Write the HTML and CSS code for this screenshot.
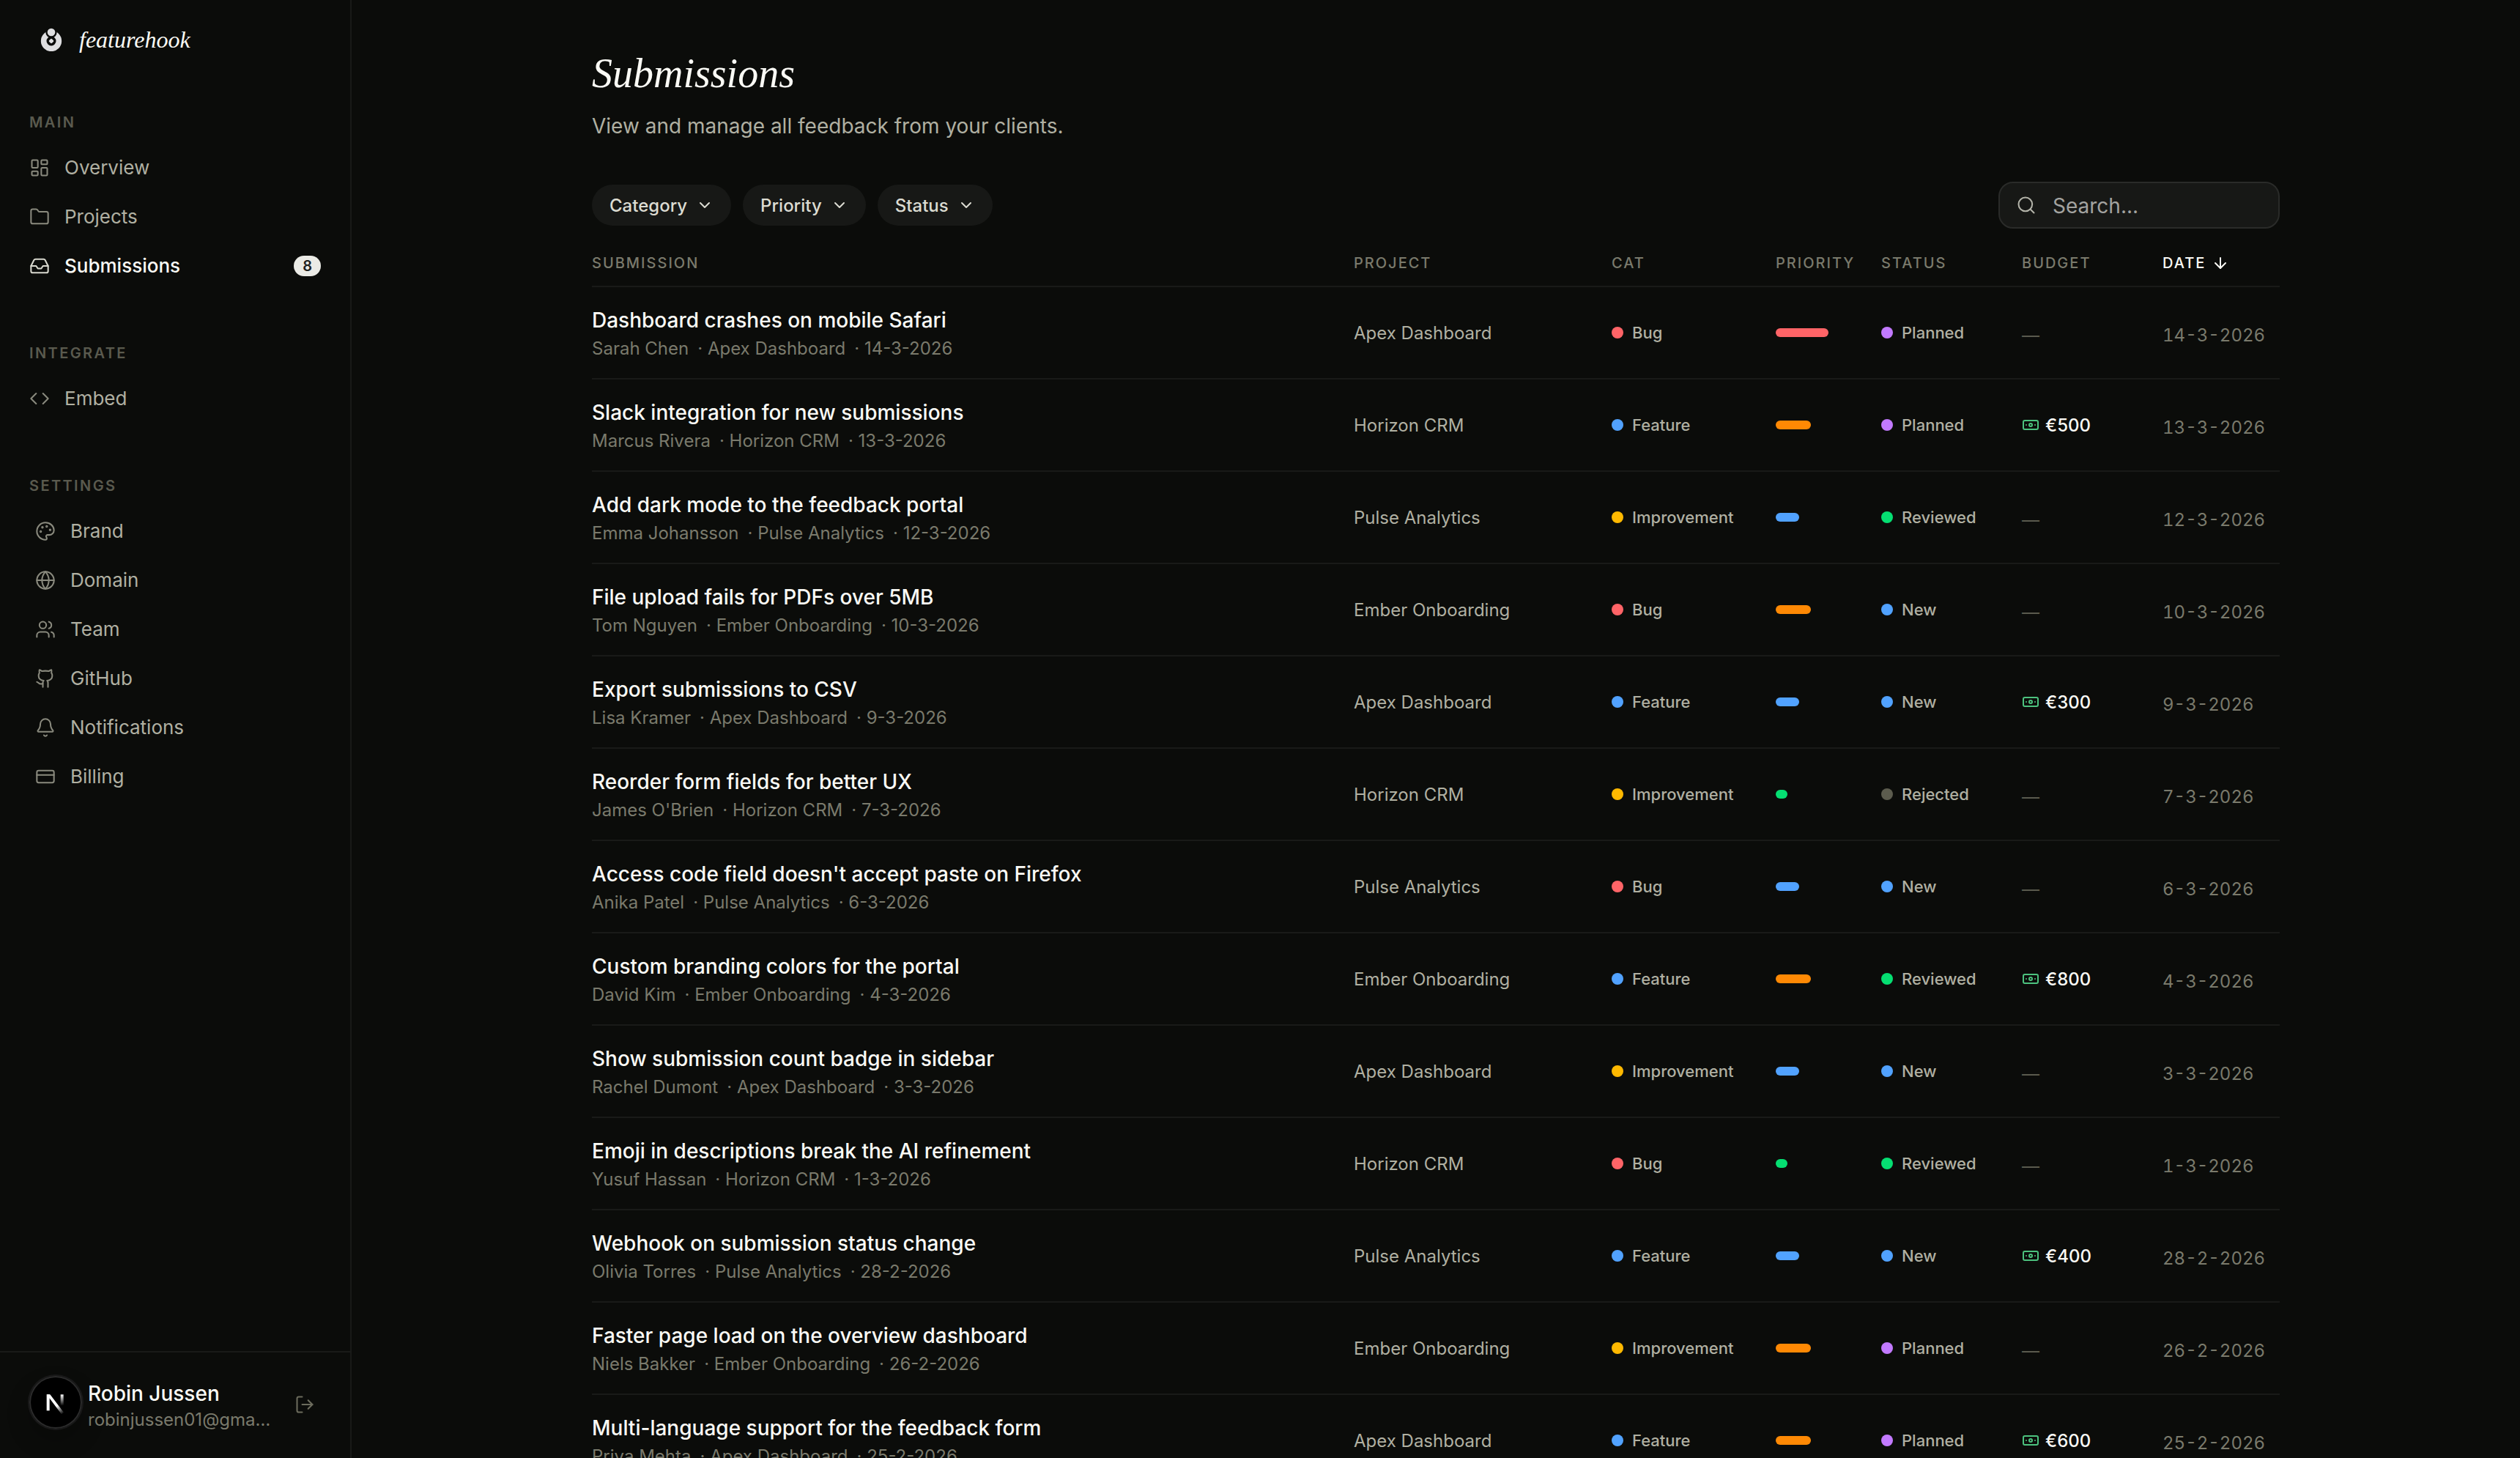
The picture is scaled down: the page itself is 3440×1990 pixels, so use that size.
FILE: index.html
```html
<!DOCTYPE html>
<html lang="en">
<head>
<meta charset="utf-8">
<title>Submissions – featurehook</title>
<link rel="stylesheet" href="styles.css">
</head>
<body>
<svg class="sprite" aria-hidden="true">
  <symbol id="i-dashboard" viewBox="0 0 24 24"><rect x="3" y="3" width="7" height="9" rx="1"/><rect x="14" y="3" width="7" height="5" rx="1"/><rect x="14" y="12" width="7" height="9" rx="1"/><rect x="3" y="16" width="7" height="5" rx="1"/></symbol>
  <symbol id="i-folder" viewBox="0 0 24 24"><path d="M20 20a2 2 0 0 0 2-2V8a2 2 0 0 0-2-2h-7.900a2 2 0 0 1-1.690-.9L9.600 3.900A2 2 0 0 0 7.930 3H4a2 2 0 0 0-2 2v13a2 2 0 0 0 2 2Z"/></symbol>
  <symbol id="i-inbox" viewBox="0 0 24 24"><path d="M22 12h-6l-2 3h-4l-2-3H2"/><path d="M5.450 5.110 2 12v6a2 2 0 0 0 2 2h16a2 2 0 0 0 2-2v-6l-3.450-6.890A2 2 0 0 0 16.760 4H7.240a2 2 0 0 0-1.790 1.110z"/></symbol>
  <symbol id="i-code" viewBox="0 0 24 24"><path d="m16 18 6-6-6-6"/><path d="m8 6-6 6 6 6"/></symbol>
  <symbol id="i-palette" viewBox="0 0 24 24"><circle cx="13.500" cy="6.500" r=".6"/><circle cx="17.500" cy="10.500" r=".6"/><circle cx="8.500" cy="7.500" r=".6"/><circle cx="6.500" cy="12.500" r=".6"/><path d="M12 2C6.500 2 2 6.500 2 12s4.500 10 10 10c.926 0 1.648-.746 1.648-1.688 0-.437-.18-.835-.437-1.125-.29-.289-.438-.652-.438-1.125a1.640 1.640 0 0 1 1.668-1.668h1.996c3.051 0 5.555-2.503 5.555-5.554C21.965 6.012 17.461 2 12 2z"/></symbol>
  <symbol id="i-globe" viewBox="0 0 24 24"><circle cx="12" cy="12" r="10"/><path d="M12 2a14.500 14.500 0 0 0 0 20 14.500 14.500 0 0 0 0-20"/><path d="M2 12h20"/></symbol>
  <symbol id="i-users" viewBox="0 0 24 24"><path d="M16 21v-2a4 4 0 0 0-4-4H6a4 4 0 0 0-4 4v2"/><circle cx="9" cy="7" r="4"/><path d="M22 21v-2a4 4 0 0 0-3-3.870"/><path d="M16 3.130a4 4 0 0 1 0 7.750"/></symbol>
  <symbol id="i-github" viewBox="0 0 24 24"><path d="M15 22v-4a4.800 4.800 0 0 0-1-3.500c3 0 6-2 6-5.500.08-1.250-.27-2.480-1-3.500.28-1.150.28-2.350 0-3.500 0 0-1 0-3 1.500-2.640-.5-5.360-.5-8 0C6 2 5 2 5 2c-.3 1.150-.3 2.350 0 3.500A5.403 5.403 0 0 0 4 9c0 3.500 3 5.500 6 5.500-.39.490-.68 1.050-.85 1.650-.17.600-.22 1.230-.15 1.850v4"/><path d="M9 18c-4.510 2-5-2-7-2"/></symbol>
  <symbol id="i-bell" viewBox="0 0 24 24"><path d="M10.268 21a2 2 0 0 0 3.464 0"/><path d="M3.262 15.326A1 1 0 0 0 4 17h16a1 1 0 0 0 .74-1.673C19.410 13.956 18 12.499 18 8A6 6 0 0 0 6 8c0 4.499-1.411 5.956-2.738 7.326"/></symbol>
  <symbol id="i-card" viewBox="0 0 24 24"><rect x="2" y="5" width="20" height="14" rx="2"/><path d="M2 10h20"/></symbol>
  <symbol id="i-logout" viewBox="0 0 24 24"><path d="M9 21H5a2 2 0 0 1-2-2V5a2 2 0 0 1 2-2h4"/><path d="m16 17 5-5-5-5"/><path d="M21 12H9"/></symbol>
  <symbol id="i-chevron" viewBox="0 0 24 24"><path d="m6 9 6 6 6-6"/></symbol>
  <symbol id="i-search" viewBox="0 0 24 24"><circle cx="11" cy="11" r="8"/><path d="m21 21-4.300-4.300"/></symbol>
  <symbol id="i-arrow" viewBox="0 0 24 24"><path d="M12 5v14"/><path d="m19 12-7 7-7-7"/></symbol>
  <symbol id="i-money" viewBox="0 0 24 24"><rect x="2" y="6" width="20" height="12" rx="2"/><circle cx="12" cy="12" r="2"/><path d="M6 12h.01M18 12h.01"/></symbol>
</svg>

<div class="app">
  <aside class="sidebar">
    <a class="brand" href="#">
      <svg class="brand-mark" viewBox="0 0 96 96" aria-hidden="true">
        <circle class="mark-ring" cx="48" cy="54" r="31"/>
        <circle class="mark-gap" cx="48" cy="18" r="23"/>
        <circle class="mark-fill" cx="48" cy="18" r="16"/>
        <rect class="mark-fill" x="40" y="46" width="16" height="16" rx="4" transform="rotate(45 48 54)"/>
      </svg>
      <span>featurehook</span>
    </a>

    <nav class="nav">
      <section class="nav-group">
        <h2 class="nav-label">MAIN</h2>
        <a class="nav-item" href="#"><svg class="icon"><use href="#i-dashboard"/></svg>Overview</a>
        <a class="nav-item" href="#"><svg class="icon"><use href="#i-folder"/></svg>Projects</a>
        <a class="nav-item active" href="#" aria-current="page"><svg class="icon"><use href="#i-inbox"/></svg>Submissions<span class="count">8</span></a>
      </section>
      <section class="nav-group">
        <h2 class="nav-label">INTEGRATE</h2>
        <a class="nav-item" href="#"><svg class="icon"><use href="#i-code"/></svg>Embed</a>
      </section>
      <section class="nav-group">
        <h2 class="nav-label">SETTINGS</h2>
        <a class="nav-item sub" href="#"><svg class="icon"><use href="#i-palette"/></svg>Brand</a>
        <a class="nav-item sub" href="#"><svg class="icon"><use href="#i-globe"/></svg>Domain</a>
        <a class="nav-item sub" href="#"><svg class="icon"><use href="#i-users"/></svg>Team</a>
        <a class="nav-item sub" href="#"><svg class="icon"><use href="#i-github"/></svg>GitHub</a>
        <a class="nav-item sub" href="#"><svg class="icon"><use href="#i-bell"/></svg>Notifications</a>
        <a class="nav-item sub" href="#"><svg class="icon"><use href="#i-card"/></svg>Billing</a>
      </section>
    </nav>

    <footer class="account">
      <div class="account-text">
        <div class="account-name">Robin Jussen</div>
        <div class="account-mail">robinjussen01@gmail.com</div>
      </div>
      <button class="logout" type="button" aria-label="Log out"><svg class="icon"><use href="#i-logout"/></svg></button>
    </footer>
  </aside>

  <main class="main">
    <div class="content">
      <h1 class="title">Submissions</h1>
      <p class="lead">View and manage all feedback from your clients.</p>

      <div class="toolbar">
        <button class="filter" type="button">Category<svg class="icon-sm"><use href="#i-chevron"/></svg></button>
        <button class="filter" type="button">Priority<svg class="icon-sm"><use href="#i-chevron"/></svg></button>
        <button class="filter" type="button">Status<svg class="icon-sm"><use href="#i-chevron"/></svg></button>
        <label class="search"><svg class="icon"><use href="#i-search"/></svg><input type="search" placeholder="Search..." aria-label="Search submissions"></label>
      </div>

      <table class="table">
        <colgroup><col><col class="c-project"><col class="c-cat"><col class="c-priority"><col class="c-status"><col class="c-budget"><col class="c-date"></colgroup>
        <thead>
          <tr><th>SUBMISSION</th><th>PROJECT</th><th>CAT</th><th>PRIORITY</th><th>STATUS</th><th>BUDGET</th><th class="sorted" aria-sort="descending"><span class="sort">DATE<svg class="icon-sm"><use href="#i-arrow"/></svg></span></th></tr>
        </thead>
        <tbody>
          <tr>
            <td><div class="name">Dashboard crashes on mobile Safari</div><div class="meta"><span>Sarah Chen</span><span>· Apex Dashboard</span><span>· 14-3-2026</span></div></td>
            <td class="project">Apex Dashboard</td><td><span class="tag red">Bug</span></td><td><div class="bar urgent"></div></td><td><span class="tag purple">Planned</span></td><td class="none">—</td><td class="date">14-3-2026</td>
          </tr>
          <tr>
            <td><div class="name">Slack integration for new submissions</div><div class="meta"><span>Marcus Rivera</span><span>· Horizon CRM</span><span>· 13-3-2026</span></div></td>
            <td class="project">Horizon CRM</td><td><span class="tag blue">Feature</span></td><td><div class="bar high"></div></td><td><span class="tag purple">Planned</span></td><td><span class="budget"><svg class="icon-sm"><use href="#i-money"/></svg>€500</span></td><td class="date">13-3-2026</td>
          </tr>
          <tr>
            <td><div class="name">Add dark mode to the feedback portal</div><div class="meta"><span>Emma Johansson</span><span>· Pulse Analytics</span><span>· 12-3-2026</span></div></td>
            <td class="project">Pulse Analytics</td><td><span class="tag yellow">Improvement</span></td><td><div class="bar medium"></div></td><td><span class="tag green">Reviewed</span></td><td class="none">—</td><td class="date">12-3-2026</td>
          </tr>
          <tr>
            <td><div class="name">File upload fails for PDFs over 5MB</div><div class="meta"><span>Tom Nguyen</span><span>· Ember Onboarding</span><span>· 10-3-2026</span></div></td>
            <td class="project">Ember Onboarding</td><td><span class="tag red">Bug</span></td><td><div class="bar high"></div></td><td><span class="tag blue">New</span></td><td class="none">—</td><td class="date">10-3-2026</td>
          </tr>
          <tr>
            <td><div class="name">Export submissions to CSV</div><div class="meta"><span>Lisa Kramer</span><span>· Apex Dashboard</span><span>· 9-3-2026</span></div></td>
            <td class="project">Apex Dashboard</td><td><span class="tag blue">Feature</span></td><td><div class="bar medium"></div></td><td><span class="tag blue">New</span></td><td><span class="budget"><svg class="icon-sm"><use href="#i-money"/></svg>€300</span></td><td class="date">9-3-2026</td>
          </tr>
          <tr>
            <td><div class="name">Reorder form fields for better UX</div><div class="meta"><span>James O'Brien</span><span>· Horizon CRM</span><span>· 7-3-2026</span></div></td>
            <td class="project">Horizon CRM</td><td><span class="tag yellow">Improvement</span></td><td><div class="bar low"></div></td><td><span class="tag gray">Rejected</span></td><td class="none">—</td><td class="date">7-3-2026</td>
          </tr>
          <tr>
            <td><div class="name">Access code field doesn't accept paste on Firefox</div><div class="meta"><span>Anika Patel</span><span>· Pulse Analytics</span><span>· 6-3-2026</span></div></td>
            <td class="project">Pulse Analytics</td><td><span class="tag red">Bug</span></td><td><div class="bar medium"></div></td><td><span class="tag blue">New</span></td><td class="none">—</td><td class="date">6-3-2026</td>
          </tr>
          <tr>
            <td><div class="name">Custom branding colors for the portal</div><div class="meta"><span>David Kim</span><span>· Ember Onboarding</span><span>· 4-3-2026</span></div></td>
            <td class="project">Ember Onboarding</td><td><span class="tag blue">Feature</span></td><td><div class="bar high"></div></td><td><span class="tag green">Reviewed</span></td><td><span class="budget"><svg class="icon-sm"><use href="#i-money"/></svg>€800</span></td><td class="date">4-3-2026</td>
          </tr>
          <tr>
            <td><div class="name">Show submission count badge in sidebar</div><div class="meta"><span>Rachel Dumont</span><span>· Apex Dashboard</span><span>· 3-3-2026</span></div></td>
            <td class="project">Apex Dashboard</td><td><span class="tag yellow">Improvement</span></td><td><div class="bar medium"></div></td><td><span class="tag blue">New</span></td><td class="none">—</td><td class="date">3-3-2026</td>
          </tr>
          <tr>
            <td><div class="name">Emoji in descriptions break the AI refinement</div><div class="meta"><span>Yusuf Hassan</span><span>· Horizon CRM</span><span>· 1-3-2026</span></div></td>
            <td class="project">Horizon CRM</td><td><span class="tag red">Bug</span></td><td><div class="bar low"></div></td><td><span class="tag green">Reviewed</span></td><td class="none">—</td><td class="date">1-3-2026</td>
          </tr>
          <tr>
            <td><div class="name">Webhook on submission status change</div><div class="meta"><span>Olivia Torres</span><span>· Pulse Analytics</span><span>· 28-2-2026</span></div></td>
            <td class="project">Pulse Analytics</td><td><span class="tag blue">Feature</span></td><td><div class="bar medium"></div></td><td><span class="tag blue">New</span></td><td><span class="budget"><svg class="icon-sm"><use href="#i-money"/></svg>€400</span></td><td class="date">28-2-2026</td>
          </tr>
          <tr>
            <td><div class="name">Faster page load on the overview dashboard</div><div class="meta"><span>Niels Bakker</span><span>· Ember Onboarding</span><span>· 26-2-2026</span></div></td>
            <td class="project">Ember Onboarding</td><td><span class="tag yellow">Improvement</span></td><td><div class="bar high"></div></td><td><span class="tag purple">Planned</span></td><td class="none">—</td><td class="date">26-2-2026</td>
          </tr>
          <tr>
            <td><div class="name">Multi-language support for the feedback form</div><div class="meta"><span>Priya Mehta</span><span>· Apex Dashboard</span><span>· 25-2-2026</span></div></td>
            <td class="project">Apex Dashboard</td><td><span class="tag blue">Feature</span></td><td><div class="bar high"></div></td><td><span class="tag purple">Planned</span></td><td><span class="budget"><svg class="icon-sm"><use href="#i-money"/></svg>€600</span></td><td class="date">25-2-2026</td>
          </tr>
        </tbody>
      </table>
    </div>
  </main>
</div>

<button class="devtools" type="button" aria-label="Open dev tools">
  <svg viewBox="0 0 216 216" aria-hidden="true">
    <defs>
      <linearGradient id="fade-bar" x1="0" y1="76" x2="0" y2="122" gradientUnits="userSpaceOnUse"><stop offset="0" stop-color="#fff"/><stop offset="1" stop-color="#fff" stop-opacity="0"/></linearGradient>
      <linearGradient id="fade-leg" x1="112" y1="122" x2="138" y2="156" gradientUnits="userSpaceOnUse"><stop offset="0" stop-color="#fff"/><stop offset="1" stop-color="#fff" stop-opacity="0"/></linearGradient>
    </defs>
    <path fill="#fff" d="M71 76v66h12V76z"/>
    <path fill="url(#fade-leg)" d="M71 76h14l56 73-9 8z"/>
    <path fill="url(#fade-bar)" d="M128 76h12v46h-12z"/>
  </svg>
</button>
</body>
</html>
```

FILE: styles.css
```css
:root {
  --bg: #0b0c0a;
  --line: #191a18;
  --text: #fafaf5;
  --soft: #b0b0a2;
  --dim: #7a7a6c;
  --faint: #5a5a4e;
  --red: #ff6467;
  --orange: #ff8904;
  --yellow: #ffb900;
  --green: #05df72;
  --blue: #51a2ff;
  --purple: #c27aff;
  --gray: #5c5c4e;
}

* { box-sizing: border-box; }

body {
  margin: 0;
  background: var(--bg);
  color: var(--text);
  font-family: Inter, "Liberation Sans", sans-serif;
}

h1, h2, p { margin: 0; }
a { color: inherit; text-decoration: none; }
button, input { font: inherit; color: inherit; }

.sprite { display: none; }

.icon, .icon-sm {
  flex: none;
  width: 28px;
  height: 28px;
  fill: none;
  stroke: currentColor;
  stroke-width: 1.75;
  stroke-linecap: round;
  stroke-linejoin: round;
}
.icon-sm { width: 24px; height: 24px; stroke-width: 2; }

.app {
  display: flex;
  height: 100vh;
  overflow: hidden;
}

/* Sidebar */
.sidebar {
  flex: none;
  display: flex;
  flex-direction: column;
  width: 480px;
  border-right: 2px solid var(--line);
}

.brand {
  display: flex;
  align-items: center;
  gap: 22px;
  padding: 34px 40px 36px 54px;
  font: italic 32px/40px "Liberation Serif", serif;
}
.brand-mark { width: 32px; height: 32px; }
.mark-ring { fill: none; stroke: #dedee0; stroke-width: 23; }
.mark-gap { fill: var(--bg); }
.mark-fill { fill: #dedee0; }

.nav {
  flex: 1;
  display: flex;
  flex-direction: column;
  gap: 70px;
  padding: 41px 40px 0;
}

.nav-label {
  margin-bottom: 12px;
  color: var(--faint);
  font-size: 20px;
  font-weight: 600;
  line-height: 32px;
  letter-spacing: 0.12em;
}

.nav-item {
  display: flex;
  align-items: center;
  gap: 20px;
  height: 67px;
  color: var(--soft);
  font-size: 26px;
}
.nav-item .icon { color: #8a8a7e; }
.nav-item.sub { padding-left: 8px; }
.nav-item.active { color: var(--text); font-weight: 500; }
.nav-item.active .icon { color: #d8d8ce; }

.count {
  margin-left: auto;
  padding: 0 12px;
  border-radius: 14px;
  background: #ebebe6;
  color: #20211e;
  font-size: 20px;
  font-weight: 600;
  line-height: 28px;
}

.account {
  display: flex;
  align-items: center;
  gap: 32px;
  padding: 37px 48px 35px 120px;
  border-top: 2px solid var(--line);
}
.account-text { flex: 1; min-width: 0; }
.account-name { font-size: 28px; font-weight: 500; line-height: 38px; }
.account-mail {
  overflow: hidden;
  color: var(--dim);
  font-size: 24px;
  line-height: 34px;
  text-overflow: ellipsis;
  white-space: nowrap;
}
.logout {
  display: flex;
  padding: 0 0 4px;
  border: 0;
  background: none;
  color: #6c6c5d;
}

/* Main column */
.main {
  flex: 1;
  min-width: 0;
  overflow-y: auto;
  scrollbar-width: none;
}
.content {
  max-width: 2432px;
  margin: 0 auto;
  padding: 64px;
}

.title {
  margin-bottom: 16px;
  font: italic 400 56px/72px "Liberation Serif", serif;
}
.lead {
  color: var(--soft);
  font-size: 28px;
  line-height: 40px;
}

.toolbar {
  display: flex;
  align-items: center;
  gap: 16px;
  margin: 56px 0 16px;
}
.filter {
  display: flex;
  align-items: center;
  gap: 12px;
  height: 56px;
  padding: 0 24px;
  border: 0;
  border-radius: 28px;
  background: #171816;
  color: #dcdcd2;
  font-size: 24px;
  font-weight: 500;
}
.search {
  display: flex;
  align-items: center;
  gap: 22px;
  width: 384px;
  height: 64px;
  margin-left: auto;
  padding: 0 22px;
  border: 2px solid #2a2b29;
  border-radius: 20px;
  background: #171816;
  color: #b4b4aa;
}
.search input {
  flex: 1;
  min-width: 0;
  padding: 2px 0 0;
  border: 0;
  outline: 0;
  background: none;
  font-size: 28px;
}
.search input::placeholder { color: #a3a3a0; opacity: 1; }

/* Table */
.table {
  width: 100%;
  border-collapse: separate;
  border-spacing: 0;
  table-layout: fixed;
}
.c-project { width: 352px; }
.c-cat { width: 224px; }
.c-priority { width: 144px; }
.c-status, .c-budget { width: 192px; }
.c-date { width: 160px; }

th, td {
  padding: 0;
  border-bottom: 2px solid var(--line);
  text-align: left;
  vertical-align: middle;
  white-space: nowrap;
}
th {
  height: 64px;
  color: var(--dim);
  font-size: 20px;
  font-weight: 500;
  letter-spacing: 2px;
}
th.sorted { color: var(--text); }
.sort { display: flex; align-items: center; gap: 8px; }

td { height: 126px; font-size: 24px; }
.name { padding-top: 3px; font-size: 28px; font-weight: 500; line-height: 40px; }
.meta {
  display: flex;
  gap: 12px;
  color: var(--dim);
  line-height: 38px;
}
.project { color: var(--soft); }

.tag {
  display: flex;
  align-items: center;
  gap: 12px;
  color: var(--soft);
  font-size: 22px;
  font-weight: 500;
}
.tag::before {
  content: "";
  width: 16px;
  height: 16px;
  border-radius: 50%;
  background: var(--gray);
}
.tag.red::before { background: var(--red); }
.tag.blue::before { background: var(--blue); }
.tag.yellow::before { background: var(--yellow); }
.tag.green::before { background: var(--green); }
.tag.purple::before { background: var(--purple); }

.bar { height: 12px; border-radius: 6px; }
.bar.urgent { width: 72px; background: var(--red); }
.bar.high { width: 48px; background: var(--orange); }
.bar.medium { width: 32px; background: var(--blue); }
.bar.low { width: 16px; background: var(--green); }

.budget {
  display: flex;
  align-items: center;
  gap: 8px;
  font-weight: 500;
}
.budget .icon-sm { color: #4cc27e; }

.none, .date { padding-top: 6px; }
.none { color: var(--faint); }
.date { color: var(--dim); font-variant-numeric: tabular-nums; }

/* Floating dev tools badge */
.devtools {
  position: fixed;
  left: 40px;
  bottom: 40px;
  width: 72px;
  height: 72px;
  padding: 0;
  border: 0;
  border-radius: 50%;
  background: #000;
  box-shadow: inset 0 0 0 2px #2b2b2b, 0 0 0 2px #191919, 0 16px 32px rgba(0, 0, 0, 0.24);
}
.devtools svg { display: block; width: 72px; height: 72px; }
```
